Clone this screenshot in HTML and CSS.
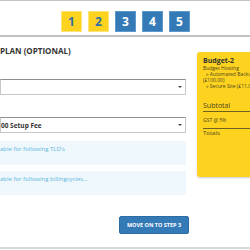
FILE: index.html
```html
<!DOCTYPE html>
<html lang="en">
	<head>
		<meta charset="UTF-8" />
		<meta name="viewport" content="width=device-width, initial-scale=1.0" />
		<title>Order Step 2</title>

		<link rel="stylesheet" href="styles.css">
	</head>

	<body>
		<div id="steps">
			<span class="step step-done">1</span>
			<span class="step step-done">2</span>
			<span class="step">3</span>
			<span class="step">4</span>
			<span class="step">5</span>
		</div>
		<!-- /#steps -->

		<div id="order">
			<div class="config">
				<h3>Plan (Optional)</h3>

				<div class="select select-first"><span class="arrow"></span></div>
				<div class="select"><span class="select-text">00 Setup Fee</span><span class="arrow"></span></div>

				<div class="info">able for following TLD's</div>
				<div class="info info-second">able for following billingcycles...</div>

				<div class="actions">
					<input type="button" class="btn-next" value="Move on to Step 3" />
				</div>
			</div>
			<!-- /.config -->

			<div class="summary">
				<div class="summary-title">Budget-2</div>
				<div class="summary-line">Budget Hosting</div>
				<div class="summary-line indent">&raquo; Automated Backu...</div>
				<div class="summary-line">(&pound;100.00)</div>
				<div class="summary-line indent">&raquo; Secure Site (&pound;11,0...</div>
				<div class="summary-sub">Subtotal</div>
				<div class="summary-gst">GST @ 5%</div>
				<div class="summary-total">Totals</div>
			</div>
			<!-- /.summary -->
		</div>
	</body>
</html>
```

FILE: styles.css
```css
html,
body {
	margin: 0;
	overflow: hidden;
}

body {
	font-family: "Open Sans", "DejaVu Sans", sans-serif;
	color: #333;
	background: #fff;
	border-top: 1px solid #c4c4c4;
	height: 249px;
	box-sizing: border-box;
	border-bottom: 2px solid #d8d8d8;
}

#steps {
	display: flex;
	justify-content: center;
	gap: 6px;
	padding-top: 10px;
	padding-left: 1px;
	height: 24px;
	border-bottom: 2px solid #c2c2c2;
}

.step {
	width: 21px;
	height: 21px;
	box-sizing: border-box;
	background: #337ab7;
	border: 1px solid #5f99cb;
	color: #fff;
	font-size: 12px;
	font-weight: bold;
	line-height: 19px;
	text-align: center;
}

.step-done {
	background: #fdd31f;
	border-color: #fee575;
	color: #2f6fa8;
}

#order {
	display: flex;
}

.config {
	width: 189px;
	flex-shrink: 0;
	padding-top: 8px;
}

.config h3 {
	margin: 0;
	font-size: 8px;
	line-height: 12px;
	text-transform: uppercase;
	color: #333;
}

.select {
	position: relative;
	width: 186px;
	height: 16px;
	box-sizing: border-box;
	margin-top: 22px;
	border: 1px solid #c8c8c8;
	border-top-color: #8e8e8e;
	font-size: 6.5px;
	font-weight: bold;
	line-height: 15px;
	color: #333;
}

.select .arrow {
	position: absolute;
	right: 3px;
	top: 6px;
	border-left: 2px solid transparent;
	border-right: 2px solid transparent;
	border-top: 2px solid #444;
}

.info {
	width: 186px;
	height: 24px;
	margin-top: 8px;
	background: #eef7fb;
	color: #5cb6dc;
	font-size: 6px;
	line-height: 6px;
	padding-top: 5px;
	box-sizing: border-box;
}

.info-second {
	margin-top: 6px;
}

.actions {
	display: flex;
	justify-content: flex-end;
	margin-top: 21px;
}

.btn-next {
	width: 70px;
	height: 18px;
	padding: 0;
	border: 1px solid #2e6da4;
	border-radius: 2px;
	background: #337ab7;
	color: #fff;
	font-family: "Open Sans", "DejaVu Sans", sans-serif;
	font-size: 5.5px;
	font-weight: bold;
	text-transform: uppercase;
}

.summary {
	width: 53px;
	flex-shrink: 0;
	margin-left: 8px;
	margin-top: 15px;
	height: 125px;
	box-sizing: border-box;
	padding: 4px 0 0 6px;
	background: #fdd31f;
	border-radius: 3px 0 0 3px;
	box-shadow: 0 1px 2px rgba(0, 0, 0, 0.2);
	white-space: nowrap;
	overflow: hidden;
	color: #4a4320;
}

.summary-title {
	font-size: 7px;
	font-weight: bold;
	line-height: 9px;
	color: #333;
}

.summary-line {
	font-size: 5px;
	line-height: 6px;
}

.summary-line:first-of-type {
	margin-top: 2px;
}

.indent {
	padding-left: 3px;
}

.summary-sub {
	margin-top: 12px;
	font-size: 7px;
	line-height: 9px;
	padding-bottom: 1px;
	border-bottom: 1px solid #6d6022;
}

.summary-gst {
	font-size: 5px;
	line-height: 6px;
	padding: 5px 0 5px;
	border-bottom: 1px solid #6d6022;
}

.summary-total {
	font-size: 6px;
	line-height: 8px;
}
```
